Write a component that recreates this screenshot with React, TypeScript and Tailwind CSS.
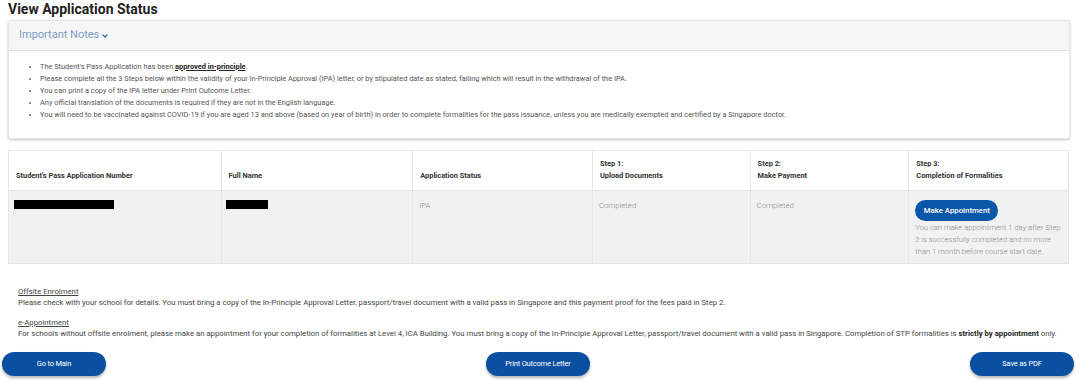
import { ChevronDown } from 'lucide-react';

const notes = [
  null,
  'Please complete all the 3 Steps below within the validity of your In-Principle Approval (IPA) letter, or by stipulated date as stated, failing which will result in the withdrawal of the IPA.',
  'You can print a copy of the IPA letter under Print Outcome Letter.',
  'Any official translation of the documents is required if they are not in the English language.',
  'You will need to be vaccinated against COVID-19 if you are aged 13 and above (based on year of birth) in order to complete formalities for the pass issuance, unless you are medically exempted and certified by a Singapore doctor.',
];

const columns = [
  { w: 'w-[212px]', lines: ["Student's Pass Application Number"] },
  { w: 'w-[192px]', lines: ['Full Name'] },
  { w: 'w-[180px]', lines: ['Application Status'] },
  { w: 'w-[158px]', lines: ['Step 1:', 'Upload Documents'] },
  { w: 'w-[159px]', lines: ['Step 2:', 'Make Payment'] },
  { w: 'w-[160px]', lines: ['Step 3:', 'Completion of Formalities'] },
];

function PillButton({ label }: { label: string }) {
  return (
    <button
      type="button"
      className="h-[24px] w-[104px] rounded-full bg-[#0a4fa0] text-[7.5px] tracking-[-0.2px] text-white shadow-[0_2px_3px_rgba(0,0,0,0.3)]"
    >
      {label}
    </button>
  );
}

export default function App() {
  return (
    <div className="h-[384px] w-[1080px] overflow-hidden bg-white font-['Roboto',sans-serif] text-[#333]">
      <h1 className="px-2 text-[14px] font-bold leading-[18px] text-[#222]">View Application Status</h1>

      <div className="mx-2 mt-[2px] w-[1062px] rounded-[3px] border border-[#e6e6e6] bg-white shadow-[0_1px_3px_rgba(0,0,0,0.22)]">
        <div className="flex h-[30px] items-center gap-[2px] border-b border-[#e2e2e2] bg-[#f6f6f6] px-[10px] text-[11px] text-[#7a9cc6]">
          <span>Important Notes</span>
          <ChevronDown size={8} strokeWidth={4} className="text-[#2a6bb5]" />
        </div>
        <ul className="list-disc pb-[17px] pl-[31px] pt-[10px] text-[7.4px] leading-[12px] text-[#555] marker:text-[#666]">
          {notes.map((n, i) =>
            n === null ? (
              <li key={i}>
                The Student's Pass Application has been{' '}
                <span className="font-bold text-[#222] underline">approved in-principle</span>.
              </li>
            ) : (
              <li key={i}>{n}</li>
            )
          )}
        </ul>
      </div>

      <div className="mx-2 mt-[11px] flex w-[1061px] flex-col border border-[#e6e6e6] text-[7.4px]">
        <div className="flex h-[39px] bg-white">
          {columns.map((c, i) => (
            <div
              key={i}
              className={`${c.w} flex flex-col justify-end pb-[8px] pl-[7px] font-bold leading-[12px] text-[#333] ${i > 0 ? 'border-l border-[#e6e6e6]' : ''}`}
            >
              {c.lines.map((l) => (
                <span key={l}>{l}</span>
              ))}
            </div>
          ))}
        </div>
        <div className="flex h-[73px] border-t border-[#e6e6e6] bg-[#f1f1f1] text-[7.8px] font-light text-[#888]">
          <div className="w-[212px] pl-[5px] pt-[9px]">
            <div className="h-[9px] w-[100px] bg-black" />
          </div>
          <div className="w-[192px] border-l border-[#e6e6e6] pl-[4px] pt-[9px]">
            <div className="h-[9px] w-[42px] bg-black" />
          </div>
          <div className="w-[180px] border-l border-[#e6e6e6] pl-[6px] pt-[10px] leading-[10px]">IPA</div>
          <div className="w-[158px] border-l border-[#e6e6e6] pl-[6px] pt-[10px] leading-[10px]">Completed</div>
          <div className="w-[159px] border-l border-[#e6e6e6] pl-[6px] pt-[10px] leading-[10px]">Completed</div>
          <div className="w-[160px] border-l border-[#e6e6e6] pl-[6px] pt-[9px]">
            <button
              type="button"
              className="h-[21px] w-[83px] rounded-full bg-[#0a56a8] text-[7.8px] font-medium text-white"
            >
              Make Appointment
            </button>
            <p className="mt-[1px] whitespace-nowrap text-[7.6px] leading-[12px] text-[#8a8a8a]">
              You can make appointment 1 day after Step
              <br />
              2 is successfully completed and no more
              <br />
              than 1 month before course start date.
            </p>
          </div>
        </div>
      </div>

      <div className="mt-[22px] px-[18px] text-[7.75px] leading-[11px] text-[#444]">
        <p className="underline">Offsite Enrolment</p>
        <p>
          Please check with your school for details. You must bring a copy of the In-Principle Approval Letter, passport/travel document with a valid pass in Singapore and this payment proof for the fees paid in Step 2.
        </p>
        <p className="mt-[9px] underline">e-Appointment</p>
        <p>
          For schools without offsite enrolment, please make an appointment for your completion of formalities at Level 4, ICA Building. You must bring a copy of the In-Principle Approval Letter, passport/travel document with a valid pass in Singapore. Completion of STP formalities is{' '}
          <span className="font-bold text-[#222]">strictly by appointment</span> only.
        </p>
      </div>

      <div className="mt-[13px] flex justify-between px-[2px] pr-[6px]">
        <PillButton label="Go to Main" />
        <PillButton label="Print Outcome Letter" />
        <PillButton label="Save as PDF" />
      </div>
    </div>
  );
}
